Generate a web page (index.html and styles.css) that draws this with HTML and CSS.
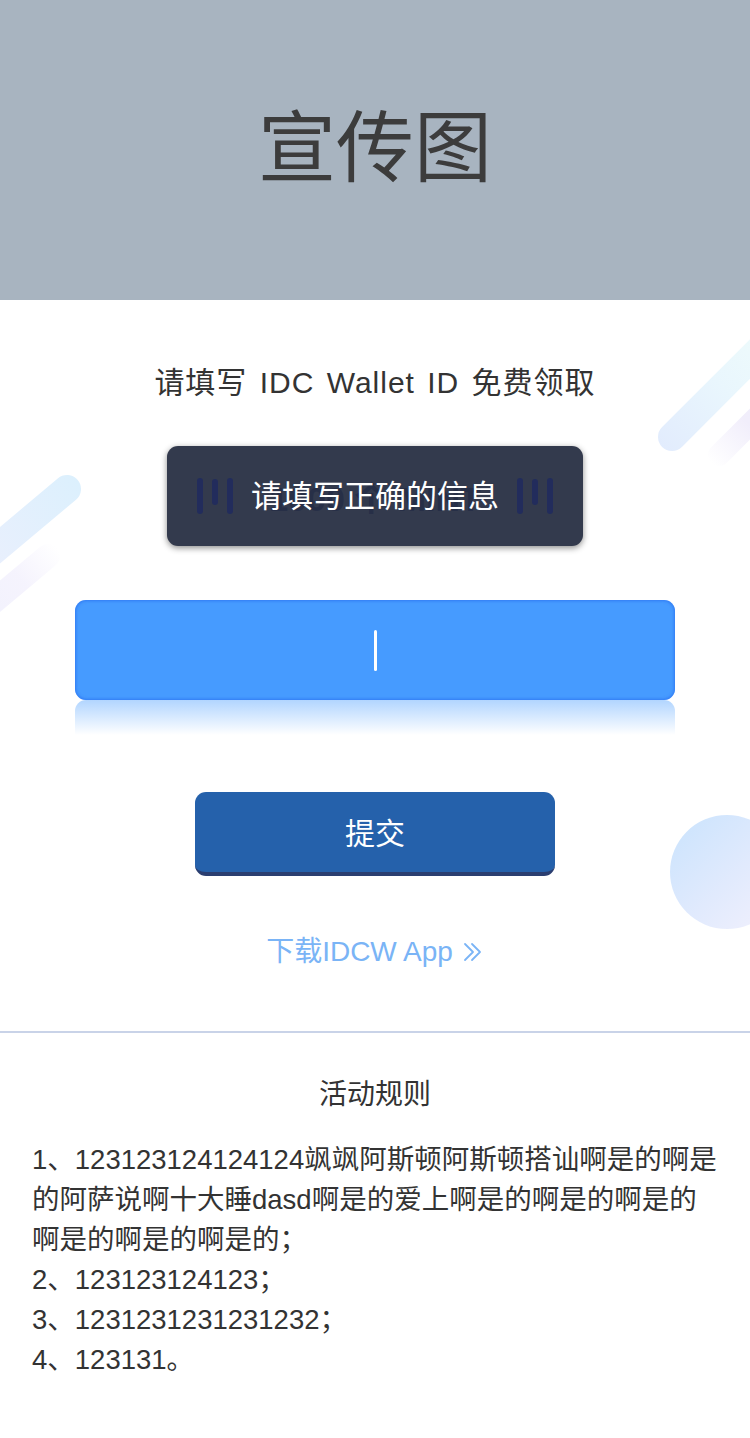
FILE: index.html
```html
<!DOCTYPE html>
<html lang="zh-CN">
<head>
<meta charset="utf-8">
<title>IDC Wallet</title>
<link rel="stylesheet" href="styles.css">
</head>
<body>
<div class="page">
  <header class="banner">
    <h1 class="banner-title">宣传图</h1>
  </header>

  <section class="claim">
    <div class="deco deco-left-a"></div>
    <div class="deco deco-left-b"></div>
    <div class="deco deco-right-a"></div>
    <div class="deco deco-right-b"></div>
    <div class="deco deco-circle"></div>

    <p class="claim-lead">请填写 IDC Wallet ID 免费领取</p>

    <div class="prize-wrap">
      <div class="prize">
        <span class="bars"><i class="bar tall"></i><i class="bar short"></i><i class="bar tall"></i></span>
        <span class="prize-text">1000 个 MINT</span>
        <span class="bars"><i class="bar tall"></i><i class="bar short"></i><i class="bar tall"></i></span>
      </div>
      <div class="toast">请填写正确的信息</div>
    </div>

    <div class="field">
      <div class="input"><span class="caret"></span></div>
      <div class="input-reflect"></div>
    </div>

    <button class="submit" type="button">提交</button>

    <a class="download" href="#">下载IDCW App<svg class="chev" viewBox="0 0 24 24" width="24" height="24"><path d="M5 4l8 8-8 8M12 4l8 8-8 8" fill="none" stroke="currentColor" stroke-width="1.8" stroke-linecap="round" stroke-linejoin="round"/></svg></a>
  </section>

  <section class="rules">
    <h2 class="rules-title">活动规则</h2>
    <div class="rules-body">
      <p>1、123123124124124飒飒阿斯顿阿斯顿搭讪啊是的啊是的阿萨说啊十大睡dasd啊是的爱上啊是的啊是的啊是的啊是的啊是的啊是的；</p>
      <p>2、123123124123；</p>
      <p>3、1231231231231232；</p>
      <p>4、123131。</p>
    </div>
  </section>
</div>
</body>
</html>
```

FILE: styles.css
```css
* { box-sizing: border-box; }

html, body {
  margin: 0;
  padding: 0;
  background: #ffffff;
}

body {
  font-family: "Liberation Sans", "Noto Sans CJK SC", sans-serif;
  color: #333333;
  overflow-x: hidden;
}

.page {
  width: 750px;
}

.banner {
  height: 300px;
  background: #a8b4c0;
  display: flex;
  align-items: center;
  justify-content: center;
}

.banner-title {
  margin: 0;
  font-family: "Noto Sans CJK SC", sans-serif;
  font-weight: 400;
  font-size: 78px;
  line-height: 1;
  color: #3c3c3c;
  transform: translateY(-8px);
}

.claim {
  position: relative;
  overflow: hidden;
  padding-top: 63px;
  padding-bottom: 59px;
  display: flex;
  flex-direction: column;
  align-items: center;
  border-bottom: 2px solid #c9d3e8;
}

.deco {
  position: absolute;
  pointer-events: none;
}

.deco-left-a {
  left: -87px;
  top: 175px;
  width: 168px;
  height: 28px;
  border-radius: 14px;
  transform-origin: calc(100% - 14px) 50%;
  transform: rotate(-40deg);
  background: linear-gradient(to right, #eeeffd, #dcf0fd);
}

.deco-left-b {
  left: -100px;
  top: 244px;
  width: 160px;
  height: 24px;
  border-radius: 12px;
  transform-origin: calc(100% - 12px) 50%;
  transform: rotate(-40deg);
  background: linear-gradient(to right, #eef0fd, rgba(244,242,253,0.9) 70%, rgba(255,255,255,0));
}

.deco-right-a {
  left: 658px;
  top: 123px;
  width: 170px;
  height: 28px;
  border-radius: 14px;
  transform-origin: 14px 50%;
  transform: rotate(-45deg);
  background: linear-gradient(to right, #e2ecfd, #e9f6fd 50%, #effcfb);
}

.deco-right-b {
  left: 708px;
  top: 144px;
  width: 120px;
  height: 22px;
  border-radius: 11px;
  transform-origin: 11px 50%;
  transform: rotate(-45deg);
  background: linear-gradient(to right, rgba(255,255,255,0), #f1eefb 45%, #eeeefb);
}

.deco-circle {
  left: 670px;
  top: 515px;
  width: 114px;
  height: 114px;
  border-radius: 50%;
  background: linear-gradient(135deg, #c9e3fd, #e1eafd 55%, #f3f1fd);
}

.claim-lead {
  position: relative;
  margin: 0;
  font-size: 30px;
  line-height: 40px;
  letter-spacing: 1px;
  word-spacing: 3px;
  color: #333333;
}

.prize-wrap {
  position: relative;
  margin-top: 43px;
  width: 416px;
  height: 100px;
}

.prize-wrap::before {
  content: "";
  position: absolute;
  inset: 0;
  border-radius: 11px;
  background: #333a4d;
  box-shadow: 0 2px 6px rgba(0, 0, 0, 0.45);
  z-index: 0;
}

.prize {
  position: relative;
  z-index: 1;
  height: 100px;
  display: flex;
  align-items: center;
  justify-content: space-between;
  padding: 0 30px;
}

.bars {
  display: flex;
  align-items: center;
  gap: 9px;
}

.bar {
  display: block;
  width: 6px;
  border-radius: 3px;
  background: #222c5c;
}

.bar.tall { height: 36px; }
.bar.short { height: 26px; margin-top: -8px; }

.prize-text {
  font-size: 34px;
  font-weight: 700;
  color: rgba(36, 44, 70, 0.8);
}

.toast {
  position: absolute;
  inset: 0;
  z-index: 2;
  display: flex;
  align-items: center;
  justify-content: center;
  color: #ffffff;
  font-family: "Noto Sans CJK SC", sans-serif;
  font-size: 31px;
  line-height: 40px;
  padding-bottom: 4px;
}

.field {
  position: relative;
  margin-top: 54px;
  width: 600px;
}

.input {
  height: 100px;
  border-radius: 11px;
  background: #469bff;
  box-shadow: inset 0 0 3px 1px rgba(40, 110, 240, 0.7);
  display: flex;
  align-items: center;
  justify-content: center;
}

.caret {
  display: block;
  width: 3px;
  height: 41px;
  border-radius: 2px;
  background: #ffffff;
}

.input-reflect {
  height: 35px;
  border-radius: 11px 11px 0 0;
  background: linear-gradient(to bottom, rgba(70, 155, 255, 0.42), rgba(70, 155, 255, 0));
}

.submit {
  position: relative;
  margin-top: 57px;
  width: 360px;
  height: 84px;
  border: none;
  border-bottom: 4px solid #2b3e70;
  border-radius: 11px;
  background: #2561ab;
  color: #ffffff;
  font-family: "Noto Sans CJK SC", sans-serif;
  font-size: 30px;
  line-height: 40px;
  padding: 0 0 2px 0;
  cursor: pointer;
}

.download {
  position: relative;
  margin-top: 56px;
  display: flex;
  align-items: center;
  font-size: 28px;
  line-height: 40px;
  color: #7ab4f6;
  text-decoration: none;
}

.chev {
  width: 24px;
  height: 24px;
  margin-left: 7px;
}

.rules {
  padding: 42px 32px 60px;
}

.rules-title {
  margin: 0;
  text-align: center;
  font-weight: 400;
  font-size: 28px;
  line-height: 40px;
  color: #333333;
}

.rules-body {
  margin-top: 25px;
  font-size: 27.5px;
  line-height: 40px;
  color: #333333;
}

.rules-body p {
  margin: 0;
}
```
